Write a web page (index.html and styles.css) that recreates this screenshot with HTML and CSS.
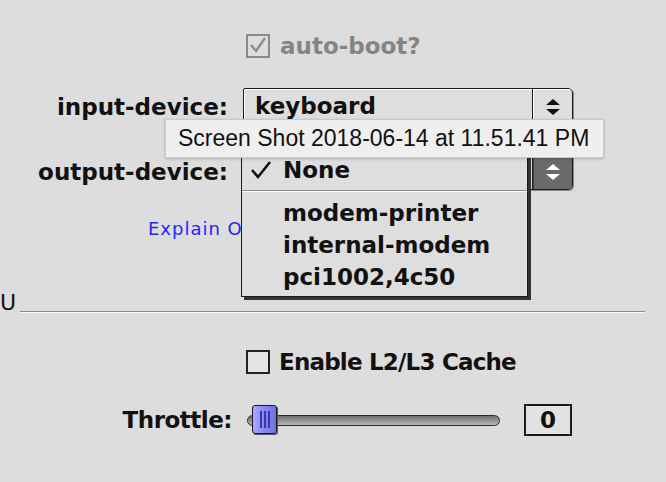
FILE: index.html
```html
<!DOCTYPE html>
<html>
<head>
<meta charset="utf-8">
<link rel="stylesheet" href="styles.css">
</head>
<body>
<div class="page">
  <div class="row row-autoboot">
    <span class="check disabled">
      <svg width="20" height="20" viewBox="0 0 20 20"><path d="M3 9 L8 15 L17 2" fill="none" stroke="#8a8a8a" stroke-width="2.2"/></svg>
    </span>
    <span class="label dim">auto-boot?</span>
  </div>

  <div class="row field row-input">
    <span class="label field-label">input-device:</span>
    <div class="popup">
      <span class="popup-text">keyboard</span>
      <span class="popup-arrows">
        <svg width="14" height="16" viewBox="0 0 14 16"><polygon points="0,6 7,0 14,6" fill="#111"/><polygon points="0,10 14,10 7,16" fill="#111"/></svg>
      </span>
    </div>
  </div>

  <div class="row field row-output">
    <span class="label field-label">output-device:</span>
    <div class="popup">
      <span class="popup-text"></span>
      <span class="popup-arrows pressed">
        <svg width="14" height="16" viewBox="0 0 14 16"><polygon points="0,6 7,0 14,6" fill="#fff"/><polygon points="0,10 14,10 7,16" fill="#fff"/></svg>
      </span>
      <div class="menu">
        <div class="menu-item current">
          <span class="menu-check">
            <svg width="22" height="20" viewBox="0 0 22 20"><path d="M2 10 L8 17 L20 2" fill="none" stroke="#111" stroke-width="2.6"/></svg>
          </span>
          <span>None</span>
        </div>
        <div class="menu-sep"></div>
        <div class="menu-item">modem-printer</div>
        <div class="menu-item">internal-modem</div>
        <div class="menu-item">pci1002,4c50</div>
      </div>
    </div>
  </div>

  <div class="row row-explain">
    <span class="link">Explain Options</span>
  </div>

  <div class="row row-divider">
    <span class="cut">U</span>
    <div class="groove"></div>
  </div>

  <div class="row row-cache">
    <span class="check"></span>
    <span class="label tight">Enable L2/L3 Cache</span>
  </div>

  <div class="row row-throttle">
    <span class="label field-label throttle-label">Throttle:</span>
    <div class="slider">
      <div class="track"></div>
      <div class="thumb"><i></i><i></i><i></i></div>
    </div>
    <div class="value">0</div>
  </div>

  <div class="tooltip">Screen Shot 2018-06-14 at 11.51.41 PM</div>
</div>
</body>
</html>
```

FILE: styles.css
```css
* { box-sizing: border-box; }
html, body { margin: 0; padding: 0; }
body {
  background: #dddddd;
  width: 666px;
  height: 482px;
  overflow: hidden;
  font-family: "DejaVu Sans", sans-serif;
  color: #111;
}
.page {
  position: relative;
  width: 666px;
  height: 482px;
  padding-top: 30px;
}
.row { display: flex; align-items: center; }
.label {
  font-weight: bold;
  font-size: 23px;
  line-height: 26px;
  white-space: nowrap;
}
.dim { color: #858585; }
.tight { letter-spacing: -0.8px; }
.throttle-label { letter-spacing: -0.5px; }

.row-autoboot { height: 32px; padding-left: 246px; gap: 10px; }
.check {
  width: 24px;
  height: 24px;
  border: 2px solid #222;
  background: #e4e4e4;
  display: flex;
  align-items: center;
  justify-content: center;
  flex: none;
}
.check.disabled { border-color: #8a8a8a; background: transparent; }

.field {
  display: grid;
  grid-template-columns: 228px 330px;
  column-gap: 15px;
  height: 37px;
}
.field-label { text-align: right; }
.row-input { margin-top: 26px; }
.row-output { margin-top: 28px; }

.popup {
  position: relative;
  height: 37px;
  border: 1px solid #1a1a1a;
  border-radius: 2px 5px 5px 2px;
  background: #dedede;
  box-shadow: inset 1px 1px 0 #fff, 1px 1px 0 #8a8a8a;
  display: flex;
  align-items: stretch;
}
.popup-text {
  flex: 1;
  padding-left: 11px;
  font-weight: bold;
  font-size: 23px;
  line-height: 34px;
}
.popup-arrows {
  width: 40px;
  border-left: 1px solid #1a1a1a;
  border-radius: 0 4px 4px 0;
  display: flex;
  align-items: center;
  justify-content: center;
  box-shadow: inset 1px 1px 0 #fff;
}
.popup-arrows.pressed { background: #6a6a6a; box-shadow: inset 1px 1px 0 #444; }

.menu {
  position: absolute;
  left: -3px;
  top: -4px;
  width: 287px;
  background: #dedede;
  border: 1px solid #1a1a1a;
  box-shadow: 3px 3px 0 #333;
  padding-bottom: 3px;
  z-index: 2;
}
.menu-item {
  display: flex;
  align-items: center;
  height: 32px;
  padding-left: 41px;
  font-weight: bold;
  font-size: 23px;
  white-space: nowrap;
}
.menu-item.current { height: 39px; padding-top: 0; padding-bottom: 2px; padding-left: 8px; gap: 11px; }
.menu-check { display: flex; width: 22px; }
.menu-sep {
  height: 2px;
  border-top: 1px solid #8c8c8c;
  border-bottom: 1px solid #fafafa;
  margin-bottom: 5px;
}

.row-explain { height: 24px; margin-top: 26px; padding-left: 148px; }
.link { color: #2424ff; font-size: 18px; letter-spacing: 1px; white-space: nowrap; }

.row-divider { height: 22px; margin-top: 52px; align-items: flex-end; }
.cut { font-size: 22px; line-height: 22px; width: 20px; align-self: stretch; }
.groove {
  width: 625px;
  height: 2px;
  border-top: 1px solid #8a8a8a;
  border-bottom: 1px solid #fbfbfb;
  margin-bottom: 1px;
}

.row-cache { height: 24px; margin-top: 36px; padding-left: 246px; gap: 9px; }

.row-throttle {
  display: grid;
  grid-template-columns: 232px 268px 72px;
  height: 34px;
  margin-top: 29px;
  align-items: center;
}
.row-throttle .slider { margin-left: 15px; }
.row-throttle .value { margin-left: 24px; }

.slider {
  position: relative;
  width: 253px;
  height: 34px;
  display: flex;
  align-items: center;
}
.track {
  width: 253px;
  height: 11px;
  border: 1px solid #2a2a2a;
  border-radius: 6px;
  background: linear-gradient(#6e6e6e, #9a9a9a 60%, #b8b8b8);
}
.thumb {
  position: absolute;
  left: 5px;
  top: 2px;
  width: 25px;
  height: 29px;
  border: 1px solid #1a1a1a;
  border-radius: 3px;
  background: linear-gradient(90deg, #a8a8ff, #8686f6 50%, #7070e0);
  box-shadow: 1px 1px 0 #555;
  display: flex;
  justify-content: center;
  align-items: center;
  gap: 2px;
}
.thumb i {
  display: block;
  width: 2px;
  height: 17px;
  background: #3a3aa0;
}
.value {
  width: 48px;
  height: 32px;
  border: 2px solid #1a1a1a;
  background: #e2e2e2;
  font-weight: bold;
  font-size: 23px;
  line-height: 28px;
  text-align: center;
}

.tooltip {
  position: absolute;
  left: 165px;
  top: 119px;
  width: 439px;
  height: 39px;
  background: #efefef;
  border: 1px solid #c9c9c9;
  box-shadow: 0 1px 3px rgba(0,0,0,0.2);
  font-family: "Liberation Sans", Arial, sans-serif;
  font-size: 23px;
  line-height: 37px;
  padding-left: 12px;
  color: #111;
  z-index: 5;
  white-space: nowrap;
}
```
